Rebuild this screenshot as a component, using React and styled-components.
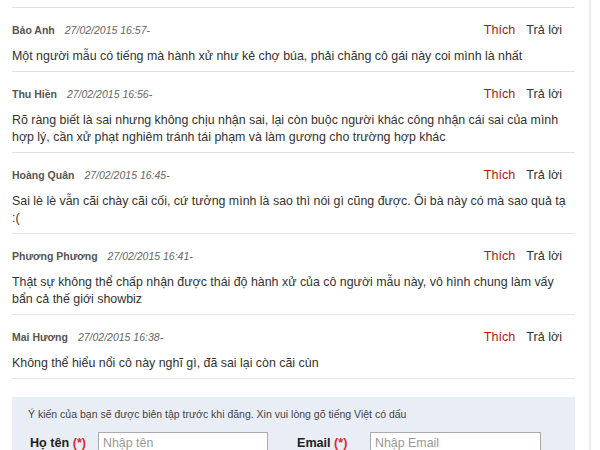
import React from 'react';
import styled, { createGlobalStyle } from 'styled-components';

const GlobalStyle = createGlobalStyle`
  body {
    margin: 0;
    background: #fff;
    font-family: "Liberation Sans", Arial, sans-serif;
    color: #333;
  }
`;

const Page = styled.div`
  display: flex;
  width: 600px;
  height: 450px;
  overflow: hidden;
`;

const Main = styled.div`
  width: 563px;
  margin-left: 12px;
  flex-shrink: 0;
`;

const SideRule = styled.div`
  margin-left: 14px;
  width: 2px;
  background: #ededed;
  flex-shrink: 0;
`;

const List = styled.div`
  margin-top: 7px;
  border-top: 1px solid #e2e2e2;
`;

const Item = styled.div`
  padding: 12px 0 6px;
  border-bottom: 1px solid #e2e2e2;
`;

const Header = styled.div`
  display: flex;
  align-items: center;
  height: 20px;
`;

const Name = styled.span`
  font-size: 10.5px;
  font-weight: bold;
  color: #555;
`;

const Time = styled.span`
  margin-left: 10px;
  font-size: 10.5px;
  font-style: italic;
  color: #666;
`;

const Actions = styled.div`
  margin-left: auto;
  margin-right: 13px;
  display: flex;
  gap: 11px;
  font-size: 12.6px;
`;

const Action = styled.span`
  color: ${p => (p.$like ? '#b5121b' : '#333')};
  cursor: pointer;
`;

const Body = styled.p`
  margin: 8px 0 0;
  padding-right: 7px;
  font-size: 12.4px;
  line-height: 17px;
  color: #333;
`;

const Form = styled.div`
  margin-top: 18px;
  background: #e9edf6;
  padding: 10px 16px 20px;
`;

const Note = styled.div`
  font-size: 10.5px;
  line-height: 15px;
  color: #444;
`;

const Fields = styled.div`
  display: flex;
  gap: 29px;
  margin-top: 10px;
  padding-left: 2px;
`;

const Field = styled.div`
  display: flex;
  align-items: center;
`;

const Label = styled.label`
  width: ${p => p.$width}px;
  font-size: 12.6px;
  font-weight: bold;
  color: #222;
`;

const Star = styled.span`
  color: #e0262b;
`;

const Input = styled.input`
  box-sizing: border-box;
  width: ${p => p.$width}px;
  height: 22px;
  padding: 0 4px;
  border: 1px solid #aaa;
  background: #fff;
  font-family: inherit;
  font-size: 12.4px;
  outline: none;
  &::placeholder { color: #999; }
`;

const comments = [
  {
    name: 'Bảo Anh',
    time: '27/02/2015 16:57-',
    text: 'Một người mẫu có tiếng mà hành xử như kẻ chợ búa, phải chăng cô gái này coi mình là nhất',
  },
  {
    name: 'Thu Hiền',
    time: '27/02/2015 16:56-',
    text: 'Rõ ràng biết là sai nhưng không chịu nhận sai, lại còn buộc người khác công nhận cái sai của mình hợp lý, cần xử phạt nghiêm tránh tái phạm và làm gương cho trường hợp khác',
  },
  {
    name: 'Hoàng Quân',
    time: '27/02/2015 16:45-',
    text: 'Sai lè lè vẫn cãi chày cãi cối, cứ tưởng mình là sao thì nói gì cũng được. Ôi bà này có mà sao quả tạ :(',
  },
  {
    name: 'Phương Phương',
    time: '27/02/2015 16:41-',
    text: 'Thật sự không thể chấp nhận được thái độ hành xử của cô người mẫu này, vô hình chung làm vấy bẩn cả thế giới showbiz',
  },
  {
    name: 'Mai Hương',
    time: '27/02/2015 16:38-',
    text: 'Không thể hiểu nổi cô này nghĩ gì, đã sai lại còn cãi cùn',
  },
];

const App = () => {
  return (
    <>
      <GlobalStyle />
      <Page>
        <Main>
          <List>
            {comments.map(c => (
              <Item key={c.time}>
                <Header>
                  <Name>{c.name}</Name>
                  <Time>{c.time}</Time>
                  <Actions>
                    <Action $like>Thích</Action>
                    <Action>Trả lời</Action>
                  </Actions>
                </Header>
                <Body>{c.text}</Body>
              </Item>
            ))}
          </List>

          <Form>
            <Note>Ý kiến của bạn sẽ được biên tập trước khi đăng. Xin vui lòng gõ tiếng Việt có dấu</Note>
            <Fields>
              <Field>
                <Label $width={68}>Họ tên <Star>(*)</Star></Label>
                <Input $width={170} placeholder="Nhập tên" />
              </Field>
              <Field>
                <Label $width={73}>Email <Star>(*)</Star></Label>
                <Input $width={171} placeholder="Nhập Email" />
              </Field>
            </Fields>
          </Form>
        </Main>
        <SideRule />
      </Page>
    </>
  );
};

export default App;
